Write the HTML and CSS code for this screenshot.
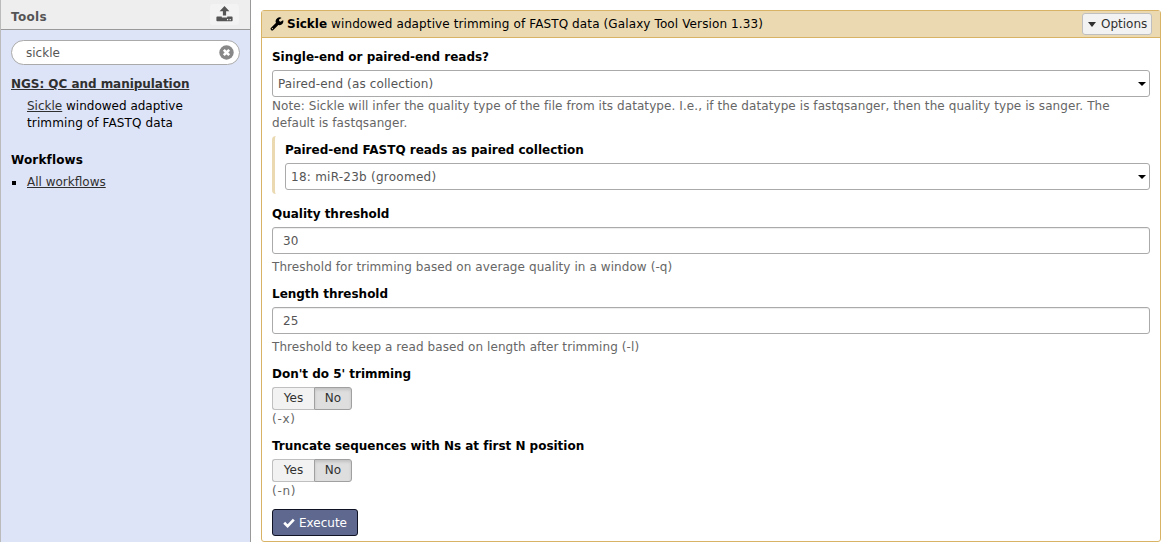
FILE: index.html
```html
<!DOCTYPE html>
<html lang="en">
<head>
<meta charset="utf-8">
<title>Galaxy</title>
<link rel="stylesheet" href="styles.css">
</head>
<body>
<aside class="sidebar">
  <header class="sidebar-head">
    <span class="sidebar-title">Tools</span>
    <button class="upload" aria-label="Upload"><svg width="17" height="16" viewBox="0 0 17 16"><path d="M8.5 0 13.4 5.2H10.1V9.6H6.9V5.2H3.6Z"/><path fill-rule="evenodd" d="M1.2 10.6H5.8V11.6H11.2V10.6H15.8Q16.6 10.6 16.6 11.4V14.5Q16.6 15.3 15.8 15.3H1.2Q.4 15.3.4 14.5V11.4Q.4 10.6 1.2 10.6ZM11 13V14.2H12.2V13ZM13.6 13V14.2H14.8V13Z"/></svg></button>
  </header>
  <div class="search"><span class="value">sickle</span><svg width="15" height="15" viewBox="0 0 15 15"><circle cx="7.5" cy="7.5" r="7.2" fill="#888"/><path d="M4.8 4.8 10.2 10.2M10.2 4.8 4.8 10.2" stroke="#fff" stroke-width="2.6"/></svg></div>
  <nav class="menu">
    <a class="section-link" href="#">NGS: QC and manipulation</a>
    <p class="tool"><a href="#">Sickle</a> windowed adaptive <span class="loose">trimming of FASTQ data</span></p>
    <h2 class="menu-heading">Workflows</h2>
    <ul class="flows"><li><a href="#">All workflows</a></li></ul>
  </nav>
</aside>
<main class="content">
  <section class="panel">
    <header class="panel-head">
      <svg class="wrench" width="14" height="14" viewBox="0 0 14 14"><path d="M2.2 11.8 8.2 5.8" stroke="#000" stroke-width="3.2" stroke-linecap="round"/><path d="M13.3 3.5A3.9 3.9 0 1 1 10.8.6L11.5 1 9.1 2.4V4L10.5 4.8 13 3.3Z"/><circle cx="2.4" cy="11.6" r=".6" fill="#ebd9b2"/></svg>
      <span class="panel-title"><b>Sickle</b> windowed adaptive trimming of FASTQ data (Galaxy Tool Version 1.33)</span>
      <button class="options"><i class="caret"></i>Options</button>
    </header>
    <form class="form">
      <div class="row">
        <label class="label">Single-end or paired-end reads?</label>
        <div class="field select"><span class="value loose">Paired-end (as collection)</span><i class="arrow"></i></div>
        <p class="help">Note: Sickle will infer the quality type of the file from its datatype. I.e., if the datatype is fastqsanger, then the quality type is sanger. The default is fastqsanger.</p>
      </div>
      <div class="nested">
        <label class="label">Paired-end FASTQ reads as paired collection</label>
        <div class="field select"><span class="value looser">18: miR-23b (groomed)</span><i class="arrow"></i></div>
      </div>
      <div class="row">
        <label class="label">Quality threshold</label>
        <div class="field input"><span class="value">30</span></div>
        <p class="help">Threshold for trimming based on average quality in a window (-q)</p>
      </div>
      <div class="row">
        <label class="label">Length threshold</label>
        <div class="field input"><span class="value">25</span></div>
        <p class="help">Threshold to keep a read based on length after trimming (-l)</p>
      </div>
      <div class="row">
        <label class="label">Don't do 5' trimming</label>
        <div class="toggle"><span class="yes">Yes</span><span class="no">No</span></div>
        <p class="help flag">(-x)</p>
      </div>
      <div class="row">
        <label class="label">Truncate sequences with Ns at first N position</label>
        <div class="toggle"><span class="yes">Yes</span><span class="no">No</span></div>
        <p class="help flag">(-n)</p>
      </div>
      <button type="button" class="execute"><svg width="12" height="10" viewBox="0 0 12 10"><path d="M1.2 4.8 4.6 8.1 10.8 1.6" fill="none" stroke="#fff" stroke-width="2.7"/></svg><span class="value">Execute</span></button>
    </form>
  </section>
</main>
</body>
</html>
```
FILE: styles.css
```css
* { box-sizing: border-box; }
body {
  margin: 0;
  height: 542px;
  display: flex;
  overflow: hidden;
  background: #fff;
  color: #000;
  font: 12px/17px "DejaVu Sans", Verdana, sans-serif;
}
button { font: inherit; margin: 0; }
p, h2, ul { margin: 0; padding: 0; }
a { color: #303030; text-decoration: underline; }
svg { display: block; flex: none; }

.value { padding-top: 2px; }
.loose { letter-spacing: .12px; }
.looser { letter-spacing: .25px; }

.sidebar {
  width: 251px;
  flex: none;
  background: #dee4f7;
  border-left: 1px solid #bbb;
  border-right: 1px solid #999;
}
.sidebar-head {
  height: 30px;
  display: flex;
  justify-content: space-between;
  padding: 4px 11px 0 10px;
  background: #eee;
  border-bottom: 1px solid #999;
}
.sidebar-title { font-weight: bold; color: #555; padding-top: 5px; letter-spacing: .3px; }
.upload {
  width: 29px;
  height: 21px;
  padding: 2px 0 0 6px;
  display: flex;
  align-items: flex-start;
  border: 0;
  border-radius: 3px;
  background: #f3f3f3;
  fill: #555;
}
.search {
  height: 25px;
  margin: 10px 10px 0;
  padding: 0 5px 0 14px;
  display: flex;
  align-items: center;
  justify-content: space-between;
  border: 1px solid #aaa;
  border-radius: 13px;
  background: #fff;
  color: #555;
}
.menu { padding: 11px 40px 0 10px; }
.section-link { display: block; font-weight: bold; white-space: nowrap; letter-spacing: -.04px; }
.tool { padding: 5px 0 0 16px; }
.menu-heading { font-size: 12px; line-height: 17px; margin-top: 20px; letter-spacing: .15px; }
.flows { list-style: none; margin-top: 5px; }
.flows li { display: flex; align-items: center; }
.flows li::before { content: ""; width: 4px; height: 4px; margin: 0 11px 0 1px; background: #000; }

.content { flex: 1; padding: 10px 0 0 10px; min-width: 0; }
.panel { height: 532px; border: 1px solid #d8b365; border-radius: 3px; }
.panel-head {
  height: 27px;
  display: flex;
  align-items: flex-start;
  padding: 2px 8px 0 8px;
  background: #ebd9b2;
  border-bottom: 1px solid #d8b365;
}
.wrench { margin: 4px 3px 0 0; }
.panel-title { flex: 1; padding-top: 3px; white-space: nowrap; letter-spacing: .115px; }
.panel-title b { letter-spacing: 0; }
.options {
  width: 70px;
  height: 22px;
  padding: 0 0 0 5px;
  display: flex;
  align-items: center;
  gap: 4px;
  border: 1px solid #bfbfbf;
  border-radius: 3px;
  background: #f2f2f2;
  color: #303030;
}
.caret { border: 4.5px solid transparent; border-top: 5px solid #303030; border-bottom: 0; margin-right: 1px; }

.form { padding: 11px 10px 0; }
.row { margin-bottom: 10px; }
.label { display: block; font-weight: bold; margin-bottom: 4px; letter-spacing: -.02px; }
.field {
  height: 27px;
  display: flex;
  align-items: center;
  border: 1px solid #aaa;
  border-radius: 3px;
  color: #555;
}
.select { justify-content: space-between; padding: 0 3px 0 5px; }
.arrow { border: 4px solid transparent; border-top: 4px solid #000; border-bottom: 0; }
.input { padding-left: 10px; box-shadow: inset 0 1px 1px rgba(0, 0, 0, .075); }
.help { color: #666; margin-top: 1px; letter-spacing: .08px; }
.input + .help { margin-top: 5px; }
.flag { letter-spacing: .7px; }
.row:first-child { margin-bottom: 4px; }
.row:nth-last-child(2) { margin-bottom: 9px; }
.nested {
  height: 58px;
  padding: 6px 0 0 10px;
  margin-bottom: 12px;
  border-left: 3px solid #ebd9b2;
  border-radius: 4px;
}
.toggle { display: flex; height: 23px; width: 80px; color: #303030; }
.yes, .no { display: flex; justify-content: center; padding-top: 2px; border: 1px solid #bfbfbf; }
.yes { width: 42px; border-right: 0; border-radius: 3px 0 0 3px; background: #f2f2f2; }
.no {
  width: 38px;
  border-color: #a0a0a0;
  border-radius: 0 3px 3px 0;
  background: #dedede;
  box-shadow: inset 0 2px 3px rgba(0, 0, 0, .125);
}
.execute {
  width: 86px;
  height: 27px;
  padding: 0;
  display: flex;
  align-items: center;
  justify-content: center;
  gap: 4px;
  border: 1px solid #101323;
  border-radius: 3px;
  background: #5f6990;
  color: #fff;
}
```
